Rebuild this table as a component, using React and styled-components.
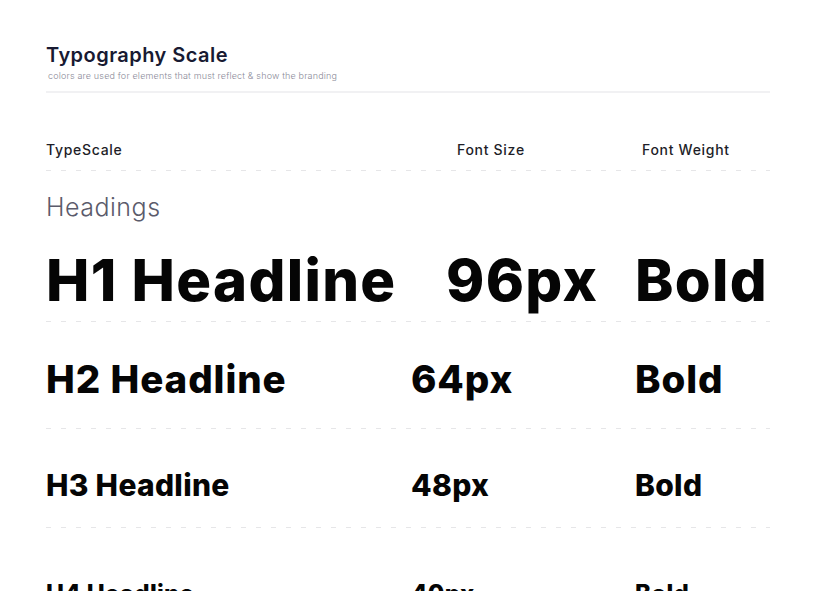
import styled, { createGlobalStyle } from "styled-components";

const Global = createGlobalStyle`
  body {
    margin: 0;
    background: #ffffff;
    font-family: Inter, "Noto Sans", sans-serif;
  }
`;

const rows = [
  { label: "H1 Headline", size: "96px", weight: "Bold", font: 58, track: 1.3, cols: "400px 189px 1fr", top: 31, bottom: 13 },
  { label: "H2 Headline", size: "64px", weight: "Bold", font: 38.5, track: 0.9, cols: "365px 224px 1fr", top: 38, bottom: 30 },
  { label: "H3 Headline", size: "48px", weight: "Bold", font: 30, track: 0.3, cols: "365px 224px 1fr", top: 41, bottom: 28 },
  { label: "H4 Headline", size: "40px", weight: "Bold", font: 24, track: 0.3, cols: "365px 224px 1fr", top: 54, bottom: 24 },
];

const App = () => {
  return (
    <>
      <Global />
      <Page>
        <Title>Typography Scale</Title>
        <Subtitle>colors are used for elements that must reflect &amp; show the branding</Subtitle>
        <Divider />
        <HeadRow>
          <span>TypeScale</span>
          <span>Font Size</span>
          <span>Font Weight</span>
        </HeadRow>
        <Section>Headings</Section>
        {rows.map(({ label, size, weight, font, track, cols, top, bottom }) => (
          <Row key={label} $font={font} $track={track} $cols={cols} $top={top} $bottom={bottom}>
            <span>{label}</span>
            <span>{size}</span>
            <span>{weight}</span>
          </Row>
        ))}
      </Page>
    </>
  );
};

export default App;

const Page = styled.div`
  width: 724px;
  padding: 45px 0 0 46px;
  height: 546px;
  overflow: hidden;
`;

const Title = styled.h1`
  margin: 0;
  font-size: 20px;
  line-height: 20px;
  font-weight: 600;
  letter-spacing: 0.45px;
  color: #181a32;
`;

const Subtitle = styled.p`
  margin: 6px 0 0 2px;
  font-size: 9px;
  line-height: 10px;
  font-weight: 300;
  letter-spacing: 0.17px;
  color: #8a8a98;
`;

const Divider = styled.div`
  margin-top: 10px;
  height: 2px;
  background: #f1f1f3;
`;

const dashed = `
  &::after {
    content: "";
    position: absolute;
    left: 0;
    right: 0;
    bottom: 0;
    height: 1px;
    background: repeating-linear-gradient(to right, #e6e6e8 0 5px, transparent 5px 15px);
  }
`;

const HeadRow = styled.div`
  position: relative;
  display: grid;
  grid-template-columns: 411px 185px 1fr;
  padding: 50px 0 14px;
  font-size: 14px;
  line-height: 14px;
  font-weight: 500;
  letter-spacing: 0.7px;
  color: #1e1e28;
  ${dashed}
`;

const Section = styled.h2`
  margin: 24px 0 0;
  font-size: 25px;
  line-height: 25px;
  font-weight: 300;
  letter-spacing: 0.5px;
  color: #5b5b6b;
`;

const Row = styled.div`
  position: relative;
  display: grid;
  grid-template-columns: ${(p) => p.$cols};
  padding: ${(p) => p.$top}px 0 ${(p) => p.$bottom}px;
  font-size: ${(p) => p.$font}px;
  line-height: 1;
  font-weight: 800;
  letter-spacing: ${(p) => p.$track}px;
  color: #050505;
  white-space: nowrap;
  ${dashed}
`;
